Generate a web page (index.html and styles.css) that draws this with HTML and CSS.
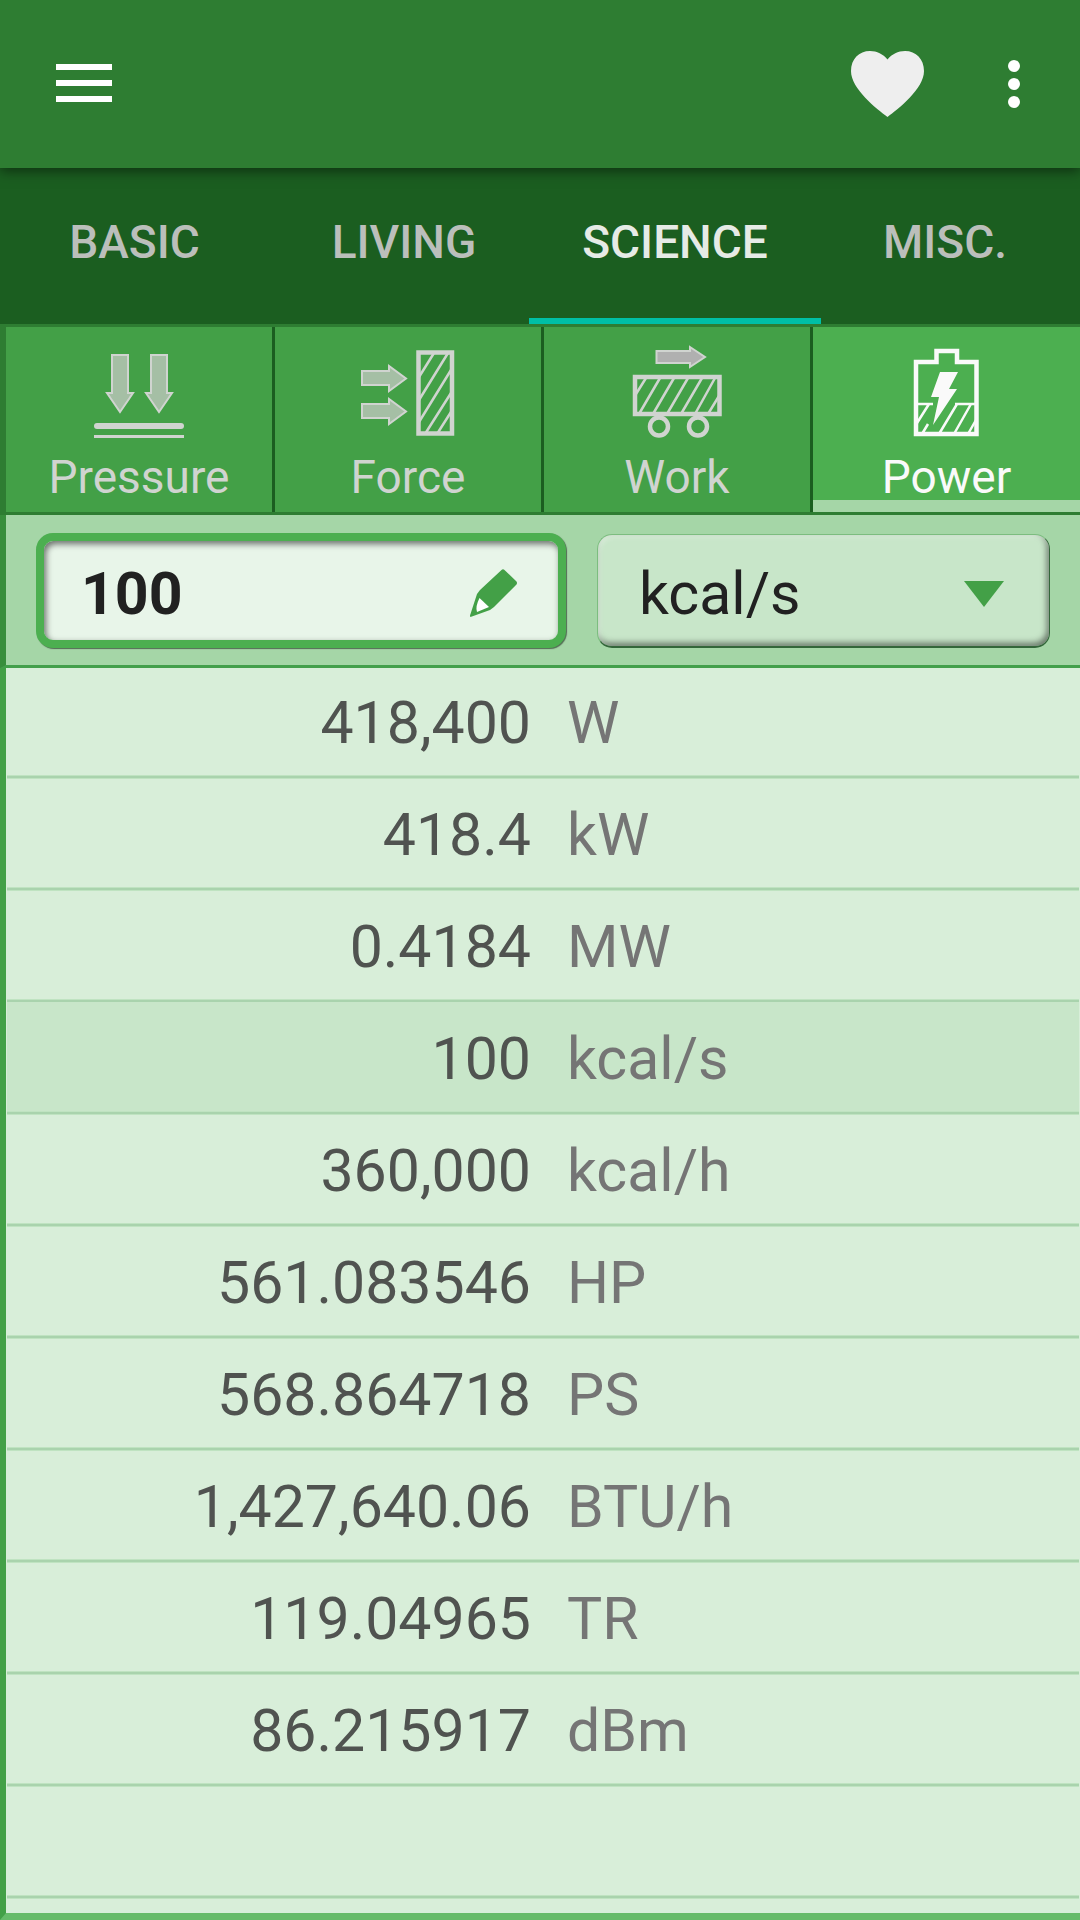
FILE: index.html
```html
<!DOCTYPE html>
<html lang="en">
  <head>
    <meta charset="UTF-8" />
    <meta name="viewport" content="width=device-width, initial-scale=1.0" />
    <title>Unit Converter</title>
    <link rel="stylesheet" href="styles.css">
  </head>
  <body>
    <header class="toolbar">
      <button class="menu-btn" aria-label="Menu">
        <span></span>
        <span></span>
        <span></span>
      </button>
      <div class="actions">
        <svg class="heart" viewBox="0 0 73 66" width="73" height="66">
          <path d="M36.500 66C26 58 0 38 0 20C0 8 8 0 19 0C26 0 32 3 36.500 8.500C41 3 47 0 54 0C65 0 73 8 73 20C73 38 47 58 36.500 66Z" fill="#eee" />
        </svg>
        <svg viewBox="0 0 12 48" width="12" height="48" fill="#fff">
          <circle cx="6" cy="6" r="6" />
          <circle cx="6" cy="24" r="6" />
          <circle cx="6" cy="42" r="6" />
        </svg>
      </div>
    </header>

    <nav class="tabs">
      <a class="tab basic">BASIC</a>
      <a class="tab living">LIVING</a>
      <a class="tab science active">SCIENCE</a>
      <a class="tab misc">MISC.</a>
    </nav>

    <div class="categories">
      <div class="category">
        <svg viewBox="0 0 100 96" width="100" height="96">
          <g fill="#a5bfa5" stroke="#d0d4d0" stroke-width="2">
            <path d="M23 18H39V56H44L31 75L18 56H23Z" />
            <path d="M62 18H78V56H83L70 75L57 56H62Z" />
          </g>
          <path d="M8 89H92" stroke="#d0d4d0" stroke-width="6" stroke-linecap="round" />
          <path d="M5 99.500H95" stroke="#d0d4d0" stroke-width="3" />
        </svg>
        <span>Pressure</span>
      </div>
      <div class="category">
        <svg viewBox="0 0 100 96" width="100" height="96">
          <g fill="#a5bfa5" stroke="#d0d4d0" stroke-width="2">
            <path d="M4 34H31V29L48 41.500L31 54V48H4Z" />
            <path d="M4 67H31V62L48 74.500L31 87V81H4Z" />
          </g>
          <rect x="60.500" y="15.500" width="33.500" height="81" fill="none" stroke="#d0d4d0" stroke-width="4.500" />
          <path d="M61 40L76 16M61 63L90 16M61 85L93 33M67 97L93 56M79 97L93 75" stroke="#d0d4d0" stroke-width="2.500" />
        </svg>
        <span>Force</span>
      </div>
      <div class="category">
        <svg viewBox="-1 0 100 96" width="100" height="96">
          <path d="M28.500 14H62V10L77 20L62 30V26H28.500Z" fill="#b0b0b0" stroke="#d0d4d0" stroke-width="2" />
          <rect x="7" y="40" width="84.500" height="37" fill="none" stroke="#d0d4d0" stroke-width="4.500" />
          <path d="M8 57L18 41M11 77L32 41M25 77L46 41M39 77L60 41M53 77L74 41M67 77L87 41M80 77L91 59" stroke="#d0d4d0" stroke-width="2.500" />
          <g fill="none" stroke="#d0d4d0" stroke-width="4.500">
            <circle cx="31" cy="89.500" r="9" />
            <circle cx="70" cy="89.500" r="9" />
          </g>
        </svg>
        <span>Work</span>
      </div>
      <div class="category active">
        <svg viewBox="0 0 100 96" width="100" height="96">
          <path d="M19 25H39.500V14H60V25H79.500V97H19V25Z" fill="none" stroke="#fafafa" stroke-width="4.500" />
          <path d="M20 67H36M58 67H79M32 67L20 86M60 67L42 97M74 67L57 97M79 83L71 97M25 97L31 87" stroke="#fafafa" stroke-width="2.500" />
          <path d="M43 35H61L52 52H60L36 88L42 60H34Z" fill="#fafafa" />
        </svg>
        <span>Power</span>
      </div>
    </div>

    <div class="input-bar">
      <div class="value-box">
        <span>100</span>
        <svg viewBox="0 0 47 48" width="47" height="48">
          <path d="M31.500 1Q33 -0.500 34.500 1L46.500 12.500Q47.500 14 46.500 15.500L24 38L20 41L0.500 48Q-0.500 47 0.500 45L7 25L10 21Z" fill="#43a047" />
          <path d="M9.500 29L19 38L7 43Q5 38 9.500 29Z" fill="#fff" />
        </svg>
      </div>
      <div class="unit-box">
        <span>kcal/s</span>
        <svg viewBox="0 0 40 26" width="40" height="26">
          <path d="M0 0H40L20 26Z" fill="#43a047" />
        </svg>
      </div>
    </div>

    <main class="results">
      <div class="row"><span class="value">418,400</span><span class="unit">W</span></div>
      <div class="row"><span class="value">418.4</span><span class="unit">kW</span></div>
      <div class="row"><span class="value">0.4184</span><span class="unit">MW</span></div>
      <div class="row selected"><span class="value">100</span><span class="unit">kcal/s</span></div>
      <div class="row"><span class="value">360,000</span><span class="unit">kcal/h</span></div>
      <div class="row"><span class="value">561.083546</span><span class="unit">HP</span></div>
      <div class="row"><span class="value">568.864718</span><span class="unit">PS</span></div>
      <div class="row"><span class="value">1,427,640.06</span><span class="unit">BTU/h</span></div>
      <div class="row"><span class="value">119.04965</span><span class="unit">TR</span></div>
      <div class="row"><span class="value">86.215917</span><span class="unit">dBm</span></div>
      <div class="row"></div>
    </main>
  </body>
</html>
```
FILE: styles.css
```css
* {
  box-sizing: border-box;
}

body {
  margin: 0;
  width: 1080px;
  height: 1920px;
  overflow: hidden;
  display: flex;
  flex-direction: column;
  font-family: Roboto, sans-serif;
  background-color: #d8eed9;
}

/* top bar */
.toolbar {
  height: 168px;
  flex-shrink: 0;
  display: flex;
  justify-content: space-between;
  align-items: center;
  padding: 0 60px 0 56px;
  background-color: #2e7d32;
  box-shadow: 0 3px 12px rgba(0, 0, 0, 0.5);
  z-index: 1;
}

.menu-btn {
  display: flex;
  flex-direction: column;
  gap: 10px;
  padding: 0;
  border: none;
  background: none;
  margin-top: -2px;
}

.menu-btn span {
  width: 56px;
  height: 6px;
  background-color: #fff;
}

.actions {
  display: flex;
  align-items: center;
  gap: 84px;
}

/* tabs */
.tabs {
  height: 156px;
  flex-shrink: 0;
  display: grid;
  grid-template-columns: 269px 260px 292px 259px;
  background-color: #1b5e20;
}

.tab {
  display: flex;
  justify-content: center;
  align-items: center;
  padding-bottom: 2px;
  border-bottom: 6px solid transparent;
  font-size: 46px;
  font-weight: 500;
  color: #bbbfbb;
}

.tab.living {
  padding-left: 10px;
}

.tab.misc {
  padding-right: 11px;
}

.tab.active {
  color: #e6ebe6;
  border-bottom-color: #00bfa5;
}

/* categories */
.categories {
  height: 191px;
  flex-shrink: 0;
  display: grid;
  grid-template-columns: 266px 266px 266px 1fr;
  border: 3px solid #2e7d32;
  border-left-width: 6px;
  border-right: none;
  column-gap: 3px;
  background-color: #1b5e20;
}

.category {
  display: flex;
  flex-direction: column;
  align-items: center;
  padding-top: 10px;
  background-color: #43a047;
  color: #d0d4d0;
  font-size: 46px;
  line-height: 54px;
}

.category svg {
  overflow: visible;
  margin-bottom: 17px;
}

.category.active {
  background-color: #4caf50;
  box-shadow: inset 0 -12px 0 #a5d6a7;
  color: #fafafa;
}

/* input bar */
.input-bar {
  height: 153px;
  flex-shrink: 0;
  display: flex;
  align-items: center;
  gap: 31px;
  padding: 1px 30px 0;
  border-left: 6px solid #388e3c;
  border-bottom: 3px solid #439f4b;
  background-color: #a5d6a7;
}

.value-box {
  width: 530px;
  height: 115px;
  display: flex;
  justify-content: space-between;
  align-items: center;
  padding: 5px 41px 0 37px;
  border: 8px solid #4caf50;
  border-radius: 17px;
  background-color: #e8f5e9;
  box-shadow: 1px 1px 1px rgba(0, 0, 0, 0.5), inset 2px 3px 6px rgba(0, 0, 0, 0.55);
  color: #212121;
  font-size: 59px;
  font-weight: 700;
}

.unit-box {
  width: 453px;
  height: 114px;
  display: flex;
  justify-content: space-between;
  align-items: center;
  padding: 6px 45px 0 41px;
  border: 1px solid #7cbd7f;
  border-right: 1px solid #33663a;
  border-bottom: 2px solid #33663a;
  border-radius: 15px;
  background-color: #c8e6c9;
  box-shadow: inset 2px 2px 5px rgba(255, 255, 255, 0.4), inset -2px -3px 6px rgba(0, 0, 0, 0.5);
  color: #212121;
  font-size: 59px;
}

.unit-box svg {
  margin-top: 2px;
}

/* results */
.results {
  flex: 1;
  overflow: hidden;
  padding: 0 1px;
  border-left: 6px solid #43a047;
  border-bottom: 7px solid #66bb6a;
}

.row {
  height: 112px;
  display: flex;
  align-items: center;
  gap: 36px;
  padding-top: 2px;
  border-bottom: 2px solid #a9d3ad;
  box-shadow: 0 1px 0 #bfe3c1, inset 0 -1px 0 #bfe3c1;
  color: #757575;
  font-size: 59px;
}

.row:first-child {
  height: 110px;
  padding-top: 0;
}

.row.selected {
  background-color: #c8e6c9;
}

.value {
  width: 524px;
  text-align: right;
  color: #505350;
}
```
